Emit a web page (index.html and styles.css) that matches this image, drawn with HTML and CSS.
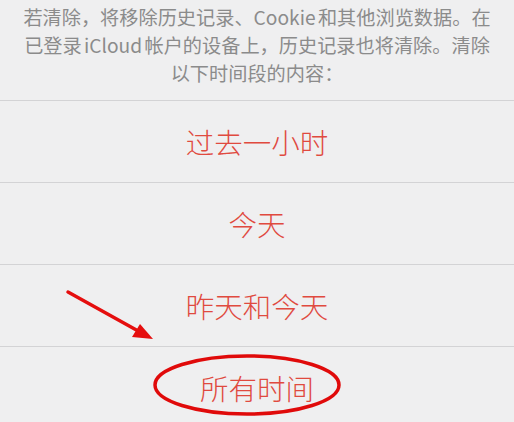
FILE: index.html
```html
<!DOCTYPE html>
<html lang="zh-CN">
<head>
<meta charset="utf-8">
<link rel="stylesheet" href="styles.css">
</head>
<body>
<div class="sheet">
  <p class="message">若清除，将移除历史记录、Cookie 和其他浏览数据。在<br>已登录 iCloud 帐户的设备上，历史记录也将清除。清除<br>以下时间段的内容：</p>
  <div class="option">过去一小时</div>
  <div class="option">今天</div>
  <div class="option">昨天和今天</div>
  <div class="option last">所有时间</div>
  <svg class="annot" width="514" height="422" viewBox="0 0 514 422">
    <line x1="68" y1="292" x2="140" y2="332" stroke="#e50e0e" stroke-width="3.5" stroke-linecap="round"/>
    <polygon points="153,339 132,337 140,324" fill="#e50e0e"/>
    <ellipse cx="247" cy="385" rx="92" ry="29" fill="none" stroke="#e00a0a" stroke-width="3.5"/>
  </svg>
</div>
</body>
</html>
```
FILE: styles.css
```css
html, body {
  margin: 0;
  padding: 0;
  background: #efeff0;
}
.sheet {
  position: relative;
  width: 514px;
  height: 422px;
  overflow: hidden;
  font-family: "Noto Sans CJK SC", "Noto Sans", sans-serif;
}
.message {
  margin: 0;
  padding: 3px 0 13px;
  font-size: 19.2px;
  line-height: 28px;
  color: #8b8b8b;
  text-align: center;
  white-space: nowrap;
  word-spacing: -2px;
}
.option {
  height: 81px;
  border-top: 1px solid #d3d3d5;
  display: flex;
  align-items: center;
  justify-content: center;
  font-size: 28.5px;
  font-weight: 300;
  color: #e04a3f;
}
.option.last {
  padding-bottom: 4px;
}
.annot {
  position: absolute;
  left: 0;
  top: 0;
  pointer-events: none;
}
```
